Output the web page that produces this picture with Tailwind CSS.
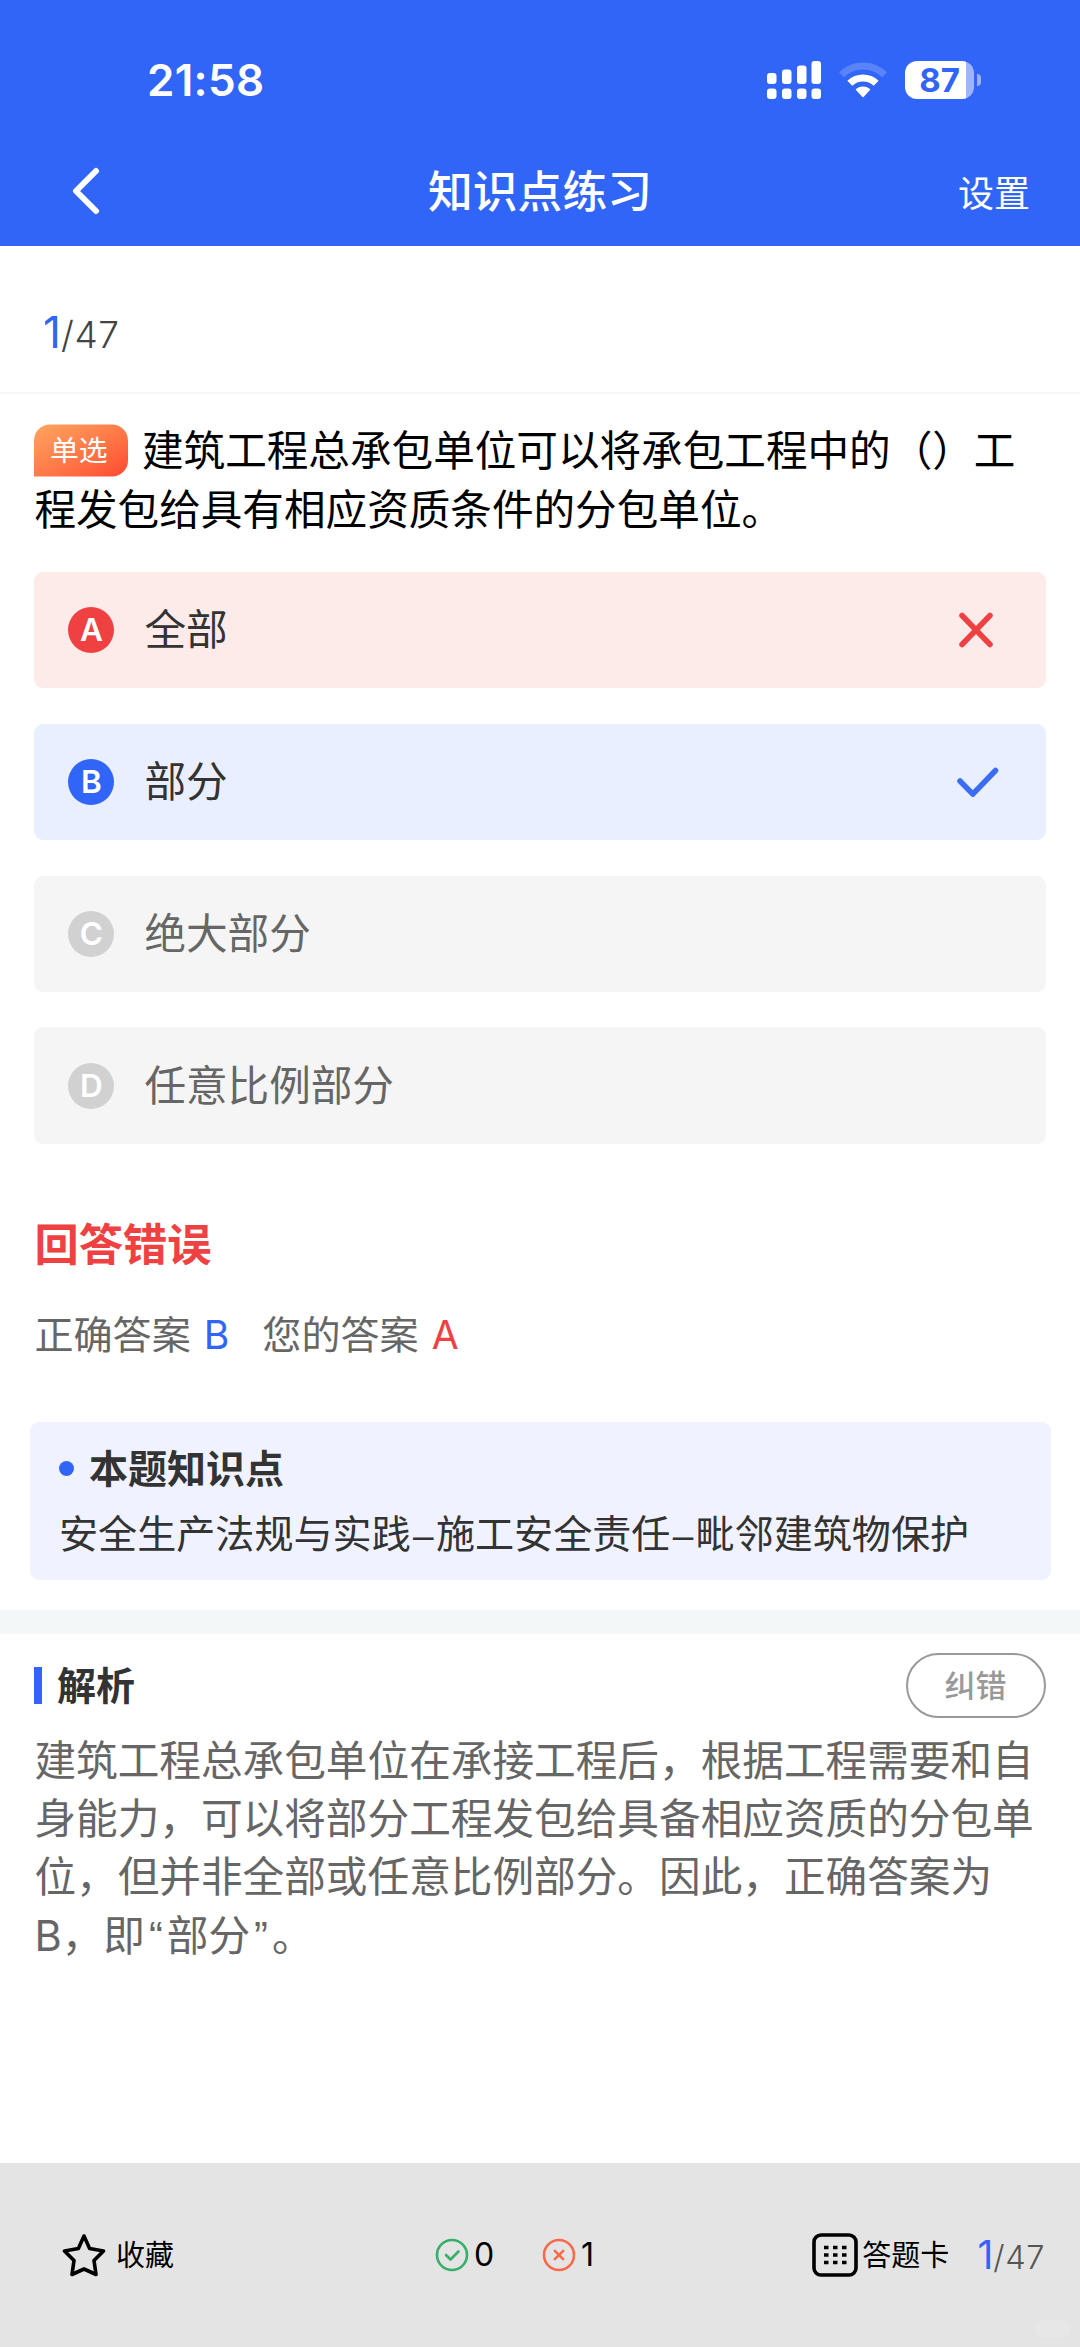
<!DOCTYPE html>
<html lang="zh-CN">
<head>
<meta charset="utf-8">
<title>知识点练习</title>
<script src="https://cdn.jsdelivr.net/npm/@tailwindcss/browser@4"></script>
</head>
<body class="bg-white">
<div class="flex h-[2347px] w-[1080px] flex-col overflow-hidden font-['Inter','Noto_Sans_CJK_SC',sans-serif] text-[41.6px] text-[#333]">

  <!-- Header -->
  <header class="flex h-[246px] shrink-0 flex-col bg-[#3165f7] text-white">
    <div class="flex h-[136px] items-center pt-6 pl-[147px] pr-[99px]">
      <div class="text-[44px] leading-none font-semibold tracking-[0.3px]">21:58</div>
      <div class="ml-auto flex items-center">
        <svg class="h-[38px] w-[54px]" viewBox="0 0 54 38" fill="#fff">
          <rect x="0" y="12" width="9.500" height="11" rx="3"/><rect x="15" y="8.500" width="9.500" height="14.500" rx="3"/><rect x="30" y="4.500" width="9.500" height="18.500" rx="3"/><rect x="44.500" y="0" width="9.500" height="23" rx="3"/>
          <rect x="0" y="27.500" width="9.500" height="10.500" rx="3"/><rect x="15" y="27.500" width="9.500" height="10.500" rx="3"/><rect x="30" y="27.500" width="9.500" height="10.500" rx="3"/><rect x="44.500" y="27.500" width="9.500" height="10.500" rx="3"/>
        </svg>
        <svg class="ml-[18px] h-[38px] w-[48px]" viewBox="0 0 48 38" fill="none" stroke="#fff" stroke-width="7">
          <path d="M2.500 13.700a31 31 0 0 1 43 0" stroke-opacity=".2"/>
          <path d="M10.800 22.300a19 19 0 0 1 26.400 0"/>
          <path d="M17.500 28.500a11 11 0 0 1 13 0L24 35.500Z" fill="#fff" stroke-width="1.500" stroke-linejoin="round"/>
        </svg>
        <div class="ml-[18px] flex h-[38px] w-[69px] items-center justify-center rounded-[12px] bg-linear-to-r from-white from-88% to-[#9fb5fb] to-88% text-[33px] leading-none font-bold text-[#3165f7]">87</div>
        <div class="ml-[3px] h-[12px] w-[4px] rounded-r-full bg-[#98b1fb]"></div>
      </div>
    </div>
    <div class="grid h-[110px] grid-cols-[1fr_auto_1fr] items-center pl-[72px] pr-[50px]">
      <svg class="h-[48px] w-[28px]" viewBox="0 0 28 48" fill="none" stroke="#fff" stroke-width="6" stroke-linecap="round" stroke-linejoin="round"><path d="M24 4 4 24l20 20"/></svg>
      <h1 class="-ml-[22px] pt-[2px] text-[44.8px] leading-none font-medium">知识点练习</h1>
      <div class="justify-self-end pt-[5px] text-[36px] leading-none">设置</div>
    </div>
  </header>

  <!-- Progress -->
  <div class="flex h-[148px] shrink-0 items-baseline border-b-2 border-[#f6f6f6] pt-[59px] pl-[43px]">
    <span class="text-[44px] leading-[54px] text-[#3165f7]">1</span><span class="text-[37px] leading-[54px] font-light tracking-[0.600px] text-[#444]">/47</span>
  </div>

  <!-- Question -->
  <section class="flex shrink-0 flex-col px-[34.4px] pt-[28.4px]">
    <p class="h-[149.600px] text-[41.6px] leading-[58.15px] text-black"><span class="mr-[14px] inline-flex h-[51.5px] w-[93.6px] -translate-y-[4.500px] items-center justify-center rounded-[16px] rounded-bl-none bg-linear-to-br from-[#ffa560] to-[#ff4630] pr-[5px] align-middle text-[28.8px] leading-none text-white">单选</span>建筑工程总承包单位可以将承包工程中的（）工程发包给具有相应资质条件的分包单位。</p>
    <div class="flex flex-col gap-[35.500px]">
      <div class="flex h-[116.300px] items-center rounded-[9px] bg-[#fdebea] px-[34px]">
        <span class="flex size-[46px] items-center justify-center rounded-full bg-[#f04142] text-[31.5px] leading-none font-semibold text-white">A</span>
        <span class="ml-[30px] pt-[1px]">全部</span>
        <svg class="ml-auto mr-[15px] size-[42px]" viewBox="0 0 42 42" fill="none" stroke="#f04142" stroke-width="5.500" stroke-linecap="round"><path d="M7 6.500 35 35.500M35 6.500 7 35.500"/></svg>
      </div>
      <div class="flex h-[116.300px] items-center rounded-[9px] bg-[#e9effe] px-[34px]">
        <span class="flex size-[46px] items-center justify-center rounded-full bg-[#3165f7] text-[31.5px] leading-none font-semibold text-white">B</span>
        <span class="ml-[30px] pt-[1px]">部分</span>
        <svg class="ml-auto mr-[13px] size-[42px]" viewBox="0 0 42 42" fill="none" stroke="#3b6cf6" stroke-width="5.500" stroke-linecap="round" stroke-linejoin="round"><path d="M3 20 15.800 33.200 38.500 9.500"/></svg>
      </div>
      <div class="flex h-[116.300px] items-center rounded-[9px] bg-[#f5f5f5] px-[34px] text-[#666]">
        <span class="flex size-[46px] items-center justify-center rounded-full bg-[#d2d1d2] text-[31.5px] leading-none font-semibold text-white">C</span>
        <span class="ml-[30px] pt-[1px]">绝大部分</span>
      </div>
      <div class="flex h-[116.300px] items-center rounded-[9px] bg-[#f5f5f5] px-[34px] text-[#666]">
        <span class="flex size-[46px] items-center justify-center rounded-full bg-[#d2d1d2] text-[31.5px] leading-none font-semibold text-white">D</span>
        <span class="ml-[30px] pt-[1px]">任意比例部分</span>
      </div>
    </div>
  </section>

  <!-- Result -->
  <section class="flex shrink-0 flex-col px-[34.4px] pt-[71px]">
    <h2 class="h-[60px] text-[44.3px] leading-[60px] font-bold text-[#f04142]">回答错误</h2>
    <div class="mt-[30px] flex h-[60px] items-center text-[39.1px] leading-[60px] text-[#666]">
      <span>正确答案</span><span class="ml-[13px] text-[#3165f7]">B</span>
      <span class="ml-[33px]">您的答案</span><span class="ml-[13px] text-[#f04142]">A</span>
    </div>
  </section>

  <!-- Knowledge point -->
  <section class="mx-[29.500px] mt-[57px] h-[158.500px] shrink-0 rounded-[9px] bg-[#f0f3ff] px-[29.500px] pt-[15px] text-[39px]">
    <div class="flex h-[64px] items-center leading-[64px] font-bold"><span class="mr-[15px] size-[15px] rounded-full bg-[#3165f7]"></span>本题知识点</div>
    <p class="h-[66px] text-[39.1px] leading-[66px] whitespace-nowrap">安全生产法规与实践<span class="mx-[2.300px] font-['Liberation_Sans',sans-serif] text-[37px]">–</span>施工安全责任<span class="mx-[2.300px] font-['Liberation_Sans',sans-serif] text-[37px]">–</span>毗邻建筑物保护</p>
  </section>

  <div class="mt-[30px] h-[24px] shrink-0 bg-[#f3f7f7]"></div>

  <!-- Analysis -->
  <section class="flex grow flex-col px-[34.4px] pt-[19px]">
    <div class="flex h-[65px] items-center">
      <span class="h-[37px] w-[7.500px] bg-[#3165f7]"></span>
      <h3 class="ml-[15px] text-[39px] leading-none font-bold">解析</h3>
      <button class="ml-auto flex h-[65px] w-[140px] items-center justify-center rounded-full border-2 border-[#999] text-[31px] leading-none font-medium text-[#999]">纠错</button>
    </div>
    <p class="mt-[14px] text-[41.65px] leading-[58.15px] text-[#666]">建筑工程总承包单位在承接工程后，根据工程需要和自身能力，可以将部分工程发包给具备相应资质的分包单位，但并非全部或任意比例部分。因此，正确答案为B，即<span class="px-[4px] font-['Liberation_Sans',sans-serif]">“</span>部分<span class="px-[4px] font-['Liberation_Sans',sans-serif]">”</span>。</p>
  </section>

  <!-- Bottom bar -->
  <footer class="relative flex h-[184px] shrink-0 items-center bg-[#e4e4e4] pl-[62px] pr-[35px] text-[29px] leading-none text-black">
    <svg class="h-[44px] w-[44px]" viewBox="0 0 44 44" fill="none" stroke="#000" stroke-width="3.600" stroke-linejoin="round"><path d="M22 3 27.600 15.600 41.500 18 32 27.500 34 41.500 22 36 10 41.500 12 27.500 2.500 18 16.400 15.600Z"/></svg>
    <span class="ml-[10px] pt-[1px]">收藏</span>
    <svg class="ml-[261px] size-[34px]" viewBox="0 0 34 34" fill="none" stroke="#35b069" stroke-width="2.600" stroke-linecap="round" stroke-linejoin="round"><circle cx="17" cy="17" r="15"/><path d="m11 17 4.500 4.500 8-8"/></svg>
    <span class="ml-[5px] w-[22px] text-[32px]">0</span>
    <svg class="ml-[46px] size-[34px]" viewBox="0 0 34 34" fill="none" stroke="#f9694a" stroke-width="2.600" stroke-linecap="round"><circle cx="17" cy="17" r="15"/><path d="m12.800 12.800 8.400 8.400m0-8.400-8.400 8.400"/></svg>
    <span class="ml-[5px] text-[32px]">1</span>
    <div class="ml-auto flex items-center">
      <svg class="h-[44px] w-[46px]" viewBox="0 0 46 44" fill="none" stroke="#000" stroke-width="3.600"><rect x="2" y="2" width="42" height="40" rx="7"/><path d="M12 14.500h4.500m4.500 0h4.500m4.500 0h4.500M12 22h4.500m4.500 0h4.500m4.500 0h4.500M12 29.500h4.500m4.500 0h4.500m4.500 0h4.500"/></svg>
      <span class="ml-[4px] pt-[1px]">答题卡</span>
      <span class="ml-[28px] flex items-baseline"><span class="text-[39px] text-[#3165f7]">1</span><span class="text-[32.5px] font-light tracking-[0.600px] text-[#555]">/47</span></span>
    </div>
    <div class="absolute right-[9px] bottom-[9px] h-[18px] w-[36px] rounded-full bg-[#e7e7e7]"></div>
  </footer>
</div>
</body>
</html>
